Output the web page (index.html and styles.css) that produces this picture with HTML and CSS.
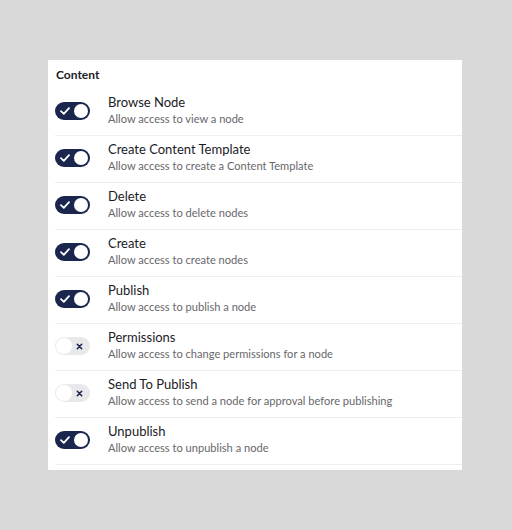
FILE: index.html
```html
<!DOCTYPE html>
<html>
<head>
<meta charset="utf-8">
<link rel="stylesheet" href="styles.css">
</head>
<body>
<div class="panel">
  <div class="heading">Content</div>
  <ul class="list">
    <li class="row">
      <span class="toggle on"><svg class="check" viewBox="0 0 10 8"><path d="M1 4.2 L3.8 6.8 L9 1.2"/></svg><span class="knob"></span></span>
      <div class="text"><div class="title">Browse Node</div><div class="desc">Allow access to view a node</div></div>
    </li>
    <li class="row">
      <span class="toggle on"><svg class="check" viewBox="0 0 10 8"><path d="M1 4.2 L3.8 6.8 L9 1.2"/></svg><span class="knob"></span></span>
      <div class="text"><div class="title">Create Content Template</div><div class="desc">Allow access to create a Content Template</div></div>
    </li>
    <li class="row">
      <span class="toggle on"><svg class="check" viewBox="0 0 10 8"><path d="M1 4.2 L3.8 6.8 L9 1.2"/></svg><span class="knob"></span></span>
      <div class="text"><div class="title">Delete</div><div class="desc">Allow access to delete nodes</div></div>
    </li>
    <li class="row">
      <span class="toggle on"><svg class="check" viewBox="0 0 10 8"><path d="M1 4.2 L3.8 6.8 L9 1.2"/></svg><span class="knob"></span></span>
      <div class="text"><div class="title">Create</div><div class="desc">Allow access to create nodes</div></div>
    </li>
    <li class="row">
      <span class="toggle on"><svg class="check" viewBox="0 0 10 8"><path d="M1 4.2 L3.8 6.8 L9 1.2"/></svg><span class="knob"></span></span>
      <div class="text"><div class="title">Publish</div><div class="desc">Allow access to publish a node</div></div>
    </li>
    <li class="row">
      <span class="toggle off"><span class="knob"></span><svg class="cross" viewBox="0 0 8 8"><path d="M1.5 1.5 L6.5 6.5 M6.5 1.5 L1.5 6.5"/></svg></span>
      <div class="text"><div class="title">Permissions</div><div class="desc">Allow access to change permissions for a node</div></div>
    </li>
    <li class="row">
      <span class="toggle off"><span class="knob"></span><svg class="cross" viewBox="0 0 8 8"><path d="M1.5 1.5 L6.5 6.5 M6.5 1.5 L1.5 6.5"/></svg></span>
      <div class="text"><div class="title">Send To Publish</div><div class="desc">Allow access to send a node for approval before publishing</div></div>
    </li>
    <li class="row">
      <span class="toggle on"><svg class="check" viewBox="0 0 10 8"><path d="M1 4.2 L3.8 6.8 L9 1.2"/></svg><span class="knob"></span></span>
      <div class="text"><div class="title">Unpublish</div><div class="desc">Allow access to unpublish a node</div></div>
    </li>
  </ul>
</div>
</body>
</html>
```
FILE: styles.css
```css
html, body {
  margin: 0;
  padding: 0;
  background: #d9d9d9;
}
body {
  width: 512px;
  height: 530px;
  padding-top: 60px;
  padding-left: 48px;
  box-sizing: border-box;
  font-family: Lato, "Open Sans", sans-serif;
}
.panel {
  width: 414px;
  height: 410px;
  background: #ffffff;
  padding-left: 7px;
  box-sizing: border-box;
}
.heading {
  font-size: 12px;
  font-weight: 700;
  color: #1b1b1f;
  padding-top: 7px;
  padding-left: 1px;
  line-height: 16px;
  height: 29px;
  box-sizing: border-box;
}
.list {
  list-style: none;
  margin: 0;
  padding: 0;
}
.row {
  display: flex;
  align-items: center;
  height: 47px;
  box-sizing: border-box;
  border-bottom: 1px solid #eeeeef;
}
.toggle {
  position: relative;
  display: flex;
  align-items: center;
  justify-content: space-between;
  width: 35px;
  height: 18px;
  border-radius: 9px;
  box-sizing: border-box;
  padding: 0 2px 0 5px;
  flex: none;
  margin-right: 18px;
  margin-top: -2px;
}
.toggle.on {
  background: #1b264f;
}
.toggle.off {
  background: #e9e9eb;
  padding: 0 7px 0 1px;
}
.knob {
  width: 14px;
  height: 14px;
  border-radius: 50%;
  background: #ffffff;
}
.toggle.off .knob {
  width: 16px;
  height: 16px;
}
.check {
  width: 10px;
  height: 8px;
}
.check path {
  fill: none;
  stroke: #ffffff;
  stroke-width: 1.8;
  stroke-linecap: round;
  stroke-linejoin: round;
}
.cross {
  width: 7px;
  height: 7px;
}
.cross path {
  fill: none;
  stroke: #1b264f;
  stroke-width: 1.8;
  stroke-linecap: round;
}
.text {
  display: flex;
  flex-direction: column;
  margin-top: -3px;
}
.title {
  font-size: 13px;
  line-height: 17px;
  color: #1b1b1f;
}
.desc {
  font-size: 11.1px;
  line-height: 16px;
  color: #68676b;
}
```
